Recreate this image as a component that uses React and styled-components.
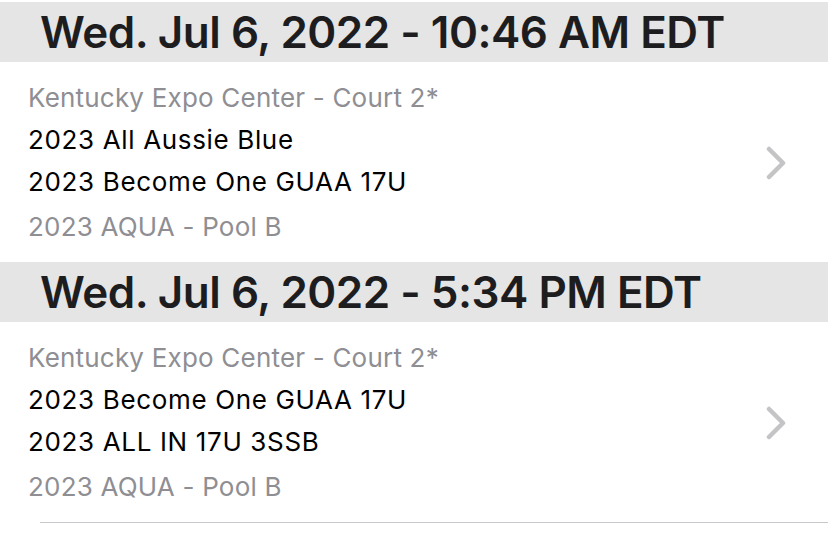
import React from "react";
import styled, { createGlobalStyle } from "styled-components";

const GlobalStyle = createGlobalStyle`
  body {
    margin: 0;
    background: #ffffff;
    font-family: Inter, "Liberation Sans", sans-serif;
  }
`;

const Page = styled.div`
  width: 828px;
  padding-top: 2px;
`;

const DateHeader = styled.div`
  height: 60px;
  background: #e5e5e5;
  padding-left: 40px;
  display: flex;
  align-items: center;
  font-size: 44px;
  font-weight: 600;
  color: #1d1d1f;
  letter-spacing: -0.5px;
`;

const MatchRow = styled.div`
  display: flex;
  align-items: center;
  padding: 15px 42px 14px 28px;
`;

const Info = styled.div`
  flex: 1;
  display: flex;
  flex-direction: column;
`;

const Line = styled.div`
  height: 42px;
  line-height: 42px;
  font-size: 26px;
  letter-spacing: ${(p) => (p.$muted ? "0.2px" : "0.65px")};
  color: ${(p) => (p.$muted ? "#8e8e93" : "#000000")};
  margin-top: ${(p) => (p.$gap ? "3px" : "0")};
`;

const Divider = styled.div`
  margin-left: 40px;
  border-top: 1px solid #c8c8cc;
`;

function Chevron() {
  return (
    <svg width="20" height="34" viewBox="0 0 20 34">
      <polyline
        points="3,3 17,17 3,31"
        fill="none"
        stroke="#c4c4c7"
        strokeWidth="4.5"
        strokeLinecap="round"
        strokeLinejoin="round"
      />
    </svg>
  );
}

const games = [
  {
    date: "Wed. Jul 6, 2022 - 10:46 AM EDT",
    venue: "Kentucky Expo Center - Court 2*",
    teams: ["2023 All Aussie Blue", "2023 Become One GUAA 17U"],
    pool: "2023 AQUA - Pool B",
  },
  {
    date: "Wed. Jul 6, 2022 - 5:34 PM EDT",
    venue: "Kentucky Expo Center - Court 2*",
    teams: ["2023 Become One GUAA 17U", "2023 ALL IN 17U 3SSB"],
    pool: "2023 AQUA - Pool B",
  },
];

export default function App() {
  return (
    <>
      <GlobalStyle />
      <Page>
        {games.map((g, i) => (
          <React.Fragment key={i}>
            <DateHeader>{g.date}</DateHeader>
            <MatchRow>
              <Info>
                <Line $muted>{g.venue}</Line>
                {g.teams.map((t) => (
                  <Line key={t}>{t}</Line>
                ))}
                <Line $muted $gap>
                  {g.pool}
                </Line>
              </Info>
              <Chevron />
            </MatchRow>
          </React.Fragment>
        ))}
        <Divider />
      </Page>
    </>
  );
}
